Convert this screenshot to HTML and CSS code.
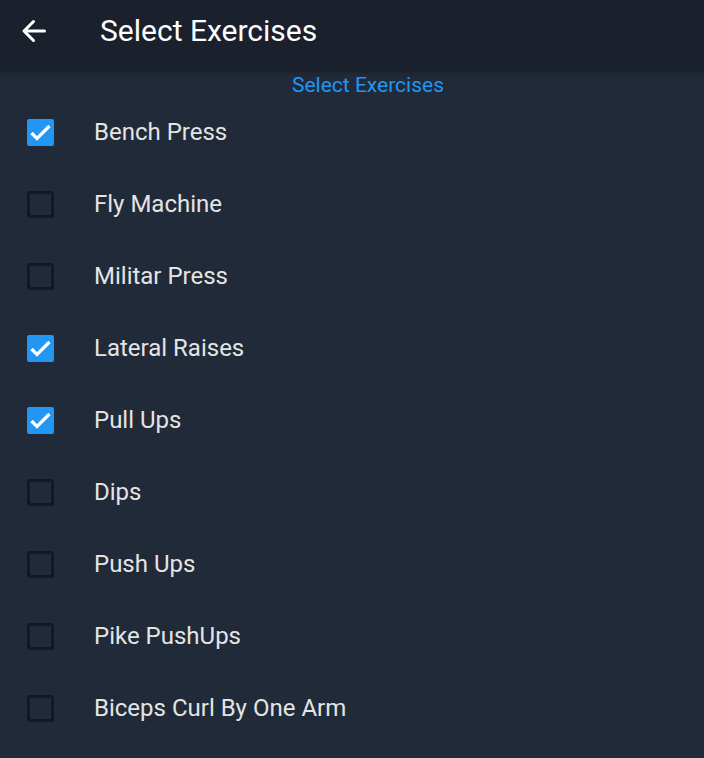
FILE: index.html
```html
<!DOCTYPE html>
<html>
<head>
<meta charset="utf-8">
<link rel="stylesheet" href="styles.css">
</head>
<body>
<header class="appbar">
  <svg class="back" width="28" height="28" viewBox="0 0 28 28"><path d="M24.5 14H4M13.5 4.5L4 14l9.5 9.5" fill="none" stroke="#fff" stroke-width="3" stroke-linecap="round" stroke-linejoin="round"/></svg>
  <h1 class="title">Select Exercises</h1>
</header>
<main class="content">
  <div class="subtitle">Select Exercises</div>
  <ul class="list">
    <li class="row"><span class="box checked"><svg viewBox="0 0 27 27"><path d="M4.5 14l5.5 5.5L22.5 7" fill="none" stroke="#fff" stroke-width="3.2"/></svg></span><span class="label">Bench Press</span></li>
    <li class="row"><span class="box"></span><span class="label">Fly Machine</span></li>
    <li class="row"><span class="box"></span><span class="label">Militar Press</span></li>
    <li class="row"><span class="box checked"><svg viewBox="0 0 27 27"><path d="M4.5 14l5.5 5.5L22.5 7" fill="none" stroke="#fff" stroke-width="3.2"/></svg></span><span class="label">Lateral Raises</span></li>
    <li class="row"><span class="box checked"><svg viewBox="0 0 27 27"><path d="M4.5 14l5.5 5.5L22.5 7" fill="none" stroke="#fff" stroke-width="3.2"/></svg></span><span class="label">Pull Ups</span></li>
    <li class="row"><span class="box"></span><span class="label">Dips</span></li>
    <li class="row"><span class="box"></span><span class="label">Push Ups</span></li>
    <li class="row"><span class="box"></span><span class="label">Pike PushUps</span></li>
    <li class="row"><span class="box"></span><span class="label">Biceps Curl By One Arm</span></li>
  </ul>
</main>
</body>
</html>
```
FILE: styles.css
```css
html, body {
  margin: 0;
  padding: 0;
  height: 100%;
}
body {
  background: #212a39;
  font-family: Roboto, "Liberation Sans", sans-serif;
  overflow: hidden;
}
.appbar {
  height: 70px;
  box-sizing: border-box;
  padding-bottom: 9px;
  background: #1a202c;
  display: flex;
  align-items: center;
  box-shadow: 0 2px 4px rgba(0,0,0,0.35);
  position: relative;
  z-index: 1;
}
.back {
  margin-left: 20px;
  display: block;
}
.title {
  margin: 0 0 0 52px;
  color: #fff;
  font-size: 30px;
  font-weight: 400;
}
.content {
  display: flex;
  flex-direction: column;
}
.subtitle {
  color: #2196f3;
  font-size: 21px;
  line-height: 24px;
  padding-top: 3px;
  height: 23px;
  text-align: center;
  padding-left: 32px;
}
.list {
  list-style: none;
  margin: 0;
  padding: 0;
}
.row {
  height: 72px;
  display: flex;
  align-items: center;
  padding-left: 27px;
}
.box {
  width: 27px;
  height: 27px;
  box-sizing: border-box;
  border: 3px solid #131922;
  border-radius: 2px;
  margin-right: 40px;
  display: block;
}
.box.checked {
  background: #2196f3;
  border: none;
}
.box svg {
  display: block;
  width: 27px;
  height: 27px;
}
.label {
  color: #e4e4e4;
  font-size: 24px;
}
```
